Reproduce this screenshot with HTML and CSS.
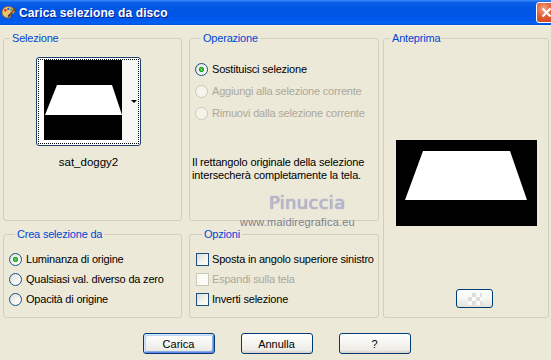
FILE: index.html
```html
<!DOCTYPE html>
<html lang="it">
<head>
    <meta charset="UTF-8">
    <title>Carica selezione da disco</title>
    <link rel="stylesheet" href="styles.css">
</head>
<body>
    <div class="window">
        <div class="titlebar">
            <svg class="app-icon" width="15" height="15" viewBox="0 0 15 15">
                <path d="M7 1.5c3.6 0 6.5 2.2 6.5 5 0 1.6-1.3 2.2-2.6 2-1.2-.2-1.9.6-1.4 1.7.5 1.2-.3 2.8-2.6 2.8C3.4 13 1 10.6 1 7.3 1 4 3.6 1.5 7 1.5z" fill="#e8c27a" stroke="#8a5a22" stroke-width=".8"/>
                <circle cx="4.3" cy="5.2" r="1.2" fill="#e0281e"/>
                <circle cx="7.3" cy="3.9" r="1.1" fill="#1e5ae0"/>
                <circle cx="10.3" cy="4.6" r="1.1" fill="#22a02a"/>
                <circle cx="3.9" cy="8.6" r="1.1" fill="#f2d21b"/>
                <path d="M14 3.5 8.5 10" stroke="#7a4a1a" stroke-width="1.4"/>
                <path d="M8.6 9.8 7.2 11.8" stroke="#333" stroke-width="1.6"/>
            </svg>
            <span class="title">Carica selezione da disco</span>
            <button class="close-btn" type="button">
                <svg width="13" height="13" viewBox="0 0 13 13">
                    <path d="M2.5 2.5l8 8M10.5 2.5l-8 8" stroke="#fff" stroke-width="2.2"/>
                </svg>
            </button>
        </div>

        <div class="dialog">
            <div class="panels">
                <fieldset class="group sel-group">
                    <legend>Selezione</legend>
                    <div class="thumb-wrap">
                        <div class="thumb-btn">
                            <div class="thumb-focus">
                                <svg class="thumb-img" width="78" height="80" viewBox="0 0 78 80">
                                    <rect width="78" height="80" fill="#000"/>
                                    <polygon points="13,25 68,25 78,55 1,55" fill="#fff"/>
                                </svg>
                                <div class="thumb-strip"><span class="drop-arrow"></span></div>
                            </div>
                        </div>
                        <div class="thumb-name">sat_doggy2</div>
                    </div>
                </fieldset>

                <fieldset class="group op-group">
                    <legend>Operazione</legend>
                    <label class="opt-row"><input type="radio" name="op" checked>Sostituisci selezione</label>
                    <label class="opt-row disabled"><input type="radio" name="op" disabled>Aggiungi alla selezione corrente</label>
                    <label class="opt-row disabled"><input type="radio" name="op" disabled>Rimuovi dalla selezione corrente</label>
                    <p class="note">Il rettangolo originale della selezione<br>intersecherà completamente la tela.</p>
                </fieldset>

                <fieldset class="group preview-group">
                    <legend>Anteprima</legend>
                    <svg class="preview" width="141" height="86" viewBox="0 0 141 86">
                        <rect width="141" height="86" fill="#000"/>
                        <polygon points="27,11 114,11 131,60 9,60" fill="#fff"/>
                    </svg>
                    <button class="mini-btn" type="button"><span class="checker"></span></button>
                </fieldset>

                <fieldset class="group crea-group">
                    <legend>Crea selezione da</legend>
                    <label class="opt-row small"><input type="radio" name="src" checked>Luminanza di origine</label>
                    <label class="opt-row small"><input type="radio" name="src">Qualsiasi val. diverso da zero</label>
                    <label class="opt-row small"><input type="radio" name="src">Opacità di origine</label>
                </fieldset>

                <fieldset class="group opt-group">
                    <legend>Opzioni</legend>
                    <label class="opt-row small"><input type="checkbox">Sposta in angolo superiore sinistro</label>
                    <label class="opt-row small disabled"><input type="checkbox" disabled>Espandi sulla tela</label>
                    <label class="opt-row small"><input type="checkbox">Inverti selezione</label>
                </fieldset>
            </div>

            <div class="actions">
                <button class="btn btn-default" type="button">Carica</button>
                <button class="btn" type="button">Annulla</button>
                <button class="btn" type="button">?</button>
            </div>

            <!-- watermark stamped over the screenshot -->
            <div class="wm-name">Pinuccia</div>
            <div class="wm-site">www.maidiregrafica.eu</div>
        </div>
    </div>
</body>
</html>
```

FILE: styles.css
```css
body {
    margin: 0;
    background: #ECE9D8;
    font-family: "Liberation Sans", Arial, sans-serif;
    font-size: 11px;
    color: #000;
}
.window {
    width: 551px;
    height: 360px;
    overflow: hidden;
    background: #ECE9D8;
}
.titlebar {
    height: 25px;
    display: flex;
    align-items: center;
    overflow: hidden;
    border-bottom: 1px solid #F4F2E8;
    background: linear-gradient(180deg, #3D8DF5 0%, #0A5FE8 10%, #0054E3 40%, #0058EA 80%, #0062F5 92%, #0049D6 100%);
}
.app-icon {
    margin: 0 3px 0 1px;
}
.title {
    color: #fff;
    font-weight: bold;
    font-size: 12px;
    letter-spacing: 0.1px;
    text-shadow: 1px 1px 0 #0A1E8C;
}
.close-btn {
    margin: 0 -6px 0 auto;
    width: 21px;
    height: 21px;
    padding: 0;
    display: flex;
    align-items: center;
    justify-content: center;
    border: 1px solid #fff;
    border-radius: 3px;
    background: radial-gradient(circle at 35% 30%, #F0A488 0%, #E05C36 45%, #C8401A 100%);
}

.dialog {
    position: relative;
    padding: 6px 3px 0;
}
.panels {
    display: grid;
    grid-template-columns: 186px 194px 166px;
    grid-template-rows: 189px 90px;
    row-gap: 7px;
}
.group {
    margin: 0;
    padding: 0;
    min-width: 0;
    border: 1px solid #D0D0BF;
    border-radius: 3px;
}
.group legend {
    margin-left: 6px;
    padding: 0 2px;
    line-height: 13px;
    color: #0046D5;
    letter-spacing: -0.2px;
}
.sel-group, .crea-group {
    margin-right: 7px;
}
.op-group, .opt-group {
    margin-right: 4px;
}
.preview-group {
    grid-column: 3;
    grid-row: 1 / span 2;
}

/* selection thumbnail */
.thumb-wrap {
    display: flex;
    flex-direction: column;
    align-items: center;
    padding: 12px 8px 0 0;
}
.thumb-btn {
    width: 101px;
    height: 85px;
    border: 1px solid #1C3F6E;
    border-radius: 3px;
    padding: 1px;
    background: #fff;
}
.thumb-focus {
    height: 100%;
    box-sizing: border-box;
    border: 1px dotted #000;
    display: flex;
    padding-left: 5px;
}
.thumb-img {
    display: block;
}
.thumb-strip {
    flex: 1;
    display: flex;
    align-items: center;
    justify-content: flex-end;
    padding-right: 1px;
    background: #F6F6F2;
}
.drop-arrow {
    width: 0;
    height: 0;
    border-left: 3px solid transparent;
    border-right: 3px solid transparent;
    border-top: 3px solid #000;
}
.thumb-name {
    margin-top: 10px;
    line-height: 13px;
    font-size: 11.5px;
}

/* radio & checkbox rows */
.opt-row {
    display: flex;
    align-items: center;
    gap: 4px;
    height: 22px;
    letter-spacing: -0.2px;
}
.opt-row.small {
    height: 20px;
}
.op-group {
    padding: 13px 0 0 5px;
}
.crea-group {
    padding: 8px 0 0 5px;
}
.opt-group {
    padding: 8px 0 0 6px;
}
.opt-group .opt-row {
    gap: 3px;
}
.opt-row input {
    appearance: none;
    margin: 0;
    width: 13px;
    height: 13px;
    flex: none;
    border: 1px solid #1C5180;
    background: linear-gradient(135deg, #DCDCD7 0%, #F4F4F0 55%, #FFFFFF 100%);
}
.opt-row input[type="radio"] {
    border-radius: 50%;
}
.opt-row input[type="radio"]:checked {
    background:
        radial-gradient(circle, #6FE06A 0, #21A121 2.2px, rgba(33,161,33,0) 3px),
        linear-gradient(135deg, #DCDCD7 0%, #F4F4F0 55%, #FFFFFF 100%);
}
.opt-row.disabled {
    color: #ACA899;
}
.opt-row input:disabled {
    border-color: #CAC8BB;
    background: #F5F4EA;
}
.opt-row input[type="checkbox"]:disabled {
    background: #FBFBF8;
}
.note {
    margin: 32px 0 0 -3px;
    line-height: 13px;
    letter-spacing: -0.15px;
}

/* preview */
.preview {
    display: block;
    margin: 95px 0 0 12px;
}
.mini-btn {
    display: flex;
    align-items: center;
    justify-content: center;
    margin: 63px 0 0 72px;
    width: 37px;
    height: 19px;
    padding: 0;
    border: 1px solid #003C74;
    border-radius: 3px;
    background: linear-gradient(180deg, #FFFFFF 0%, #F4F4F0 55%, #E3E2DA 100%);
}
.checker {
    width: 14px;
    height: 12px;
    background: repeating-conic-gradient(#DDDDDA 0 25%, #FAFAF8 0 50%) 0 0 / 8px 8px;
}

/* bottom buttons */
.actions {
    display: flex;
    justify-content: center;
    gap: 26px;
    margin-top: 15px;
    padding-left: 2px;
}
.btn {
    width: 72px;
    height: 21px;
    padding: 0;
    font-family: "Liberation Sans", Arial, sans-serif;
    font-size: 11px;
    color: #000;
    border: 1px solid #003C74;
    border-radius: 3px;
    background: linear-gradient(180deg, #FFFFFF 0%, #F5F5F1 45%, #ECEBE6 85%, #D6D0C5 100%);
}
.btn-default {
    box-shadow: inset 1px 1px 0 #CEE7FF, inset -1px -1px 0 #6982EE, inset 2px 2px 0 #BCD4F6, inset -2px -2px 0 #89ADE4;
}

/* watermark */
.wm-name {
    position: absolute;
    left: 269px;
    top: 168px;
    font-family: "DejaVu Sans", sans-serif;
    font-size: 18px;
    line-height: 18px;
    letter-spacing: 0.3px;
    color: #B8B8D4;
    text-shadow: 0 0 1px #7E7EA0;
}
.wm-site {
    position: absolute;
    left: 240px;
    top: 190px;
    font-size: 11px;
    line-height: 12px;
    color: #80808E;
    letter-spacing: 0.2px;
}
```
